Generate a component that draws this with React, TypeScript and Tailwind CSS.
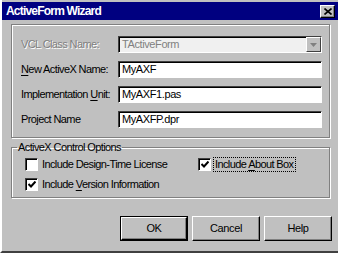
import React from "react";

const font = { fontFamily: '"Liberation Sans", Arial, sans-serif' };

function Field({
  label,
  ul,
  value,
  disabled,
  combo,
}: {
  label: [string, string, string];
  ul?: boolean;
  value: string;
  disabled?: boolean;
  combo?: boolean;
}) {
  return (
    <div className="flex items-center h-[17px]">
      <div
        className={
          "w-[97px] shrink-0 text-[11px] tracking-[-0.6px] leading-none whitespace-nowrap " +
          (disabled ? "text-[#808080] [text-shadow:1px_1px_0_#fff]" : "text-black")
        }
      >
        {label[0]}
        {ul ? <span className="underline underline-offset-2">{label[1]}</span> : label[1]}
        {label[2]}
      </div>
      <div
        className={
          "flex-1 h-[17px] flex items-center border-t border-l border-t-[#404040] border-l-[#404040] border-b border-r border-b-white border-r-white shadow-[inset_1px_1px_0_#000] " +
          (disabled ? "bg-[#f0f0f0]" : "bg-white")
        }
      >
        <span
          className={
            "flex-1 pl-[3px] text-[11px] tracking-[-0.4px] leading-none " +
            (disabled ? "text-[#808080]" : "text-black")
          }
        >
          {value}
        </span>
        {combo && (
          <div className="w-[15px] h-[15px] bg-[#c0c0c0] border border-t-white border-l-white border-b-[#404040] border-r-[#404040] flex items-center justify-center">
            <svg width="7" height="4" viewBox="0 0 7 4">
              <polygon points="0,0 7,0 3.5,4" fill="#808080" />
            </svg>
          </div>
        )}
      </div>
    </div>
  );
}

function Check({
  checked,
  children,
  focus,
}: {
  checked?: boolean;
  children: React.ReactNode;
  focus?: boolean;
}) {
  return (
    <div className="flex items-center gap-[3px] h-[13px] whitespace-nowrap">
      <div className="w-[13px] h-[13px] shrink-0 bg-white border-t border-l border-t-[#404040] border-l-[#404040] border-b border-r border-b-white border-r-white shadow-[inset_1px_1px_0_#000] flex items-center justify-center">
        {checked && (
          <svg width="8" height="7" viewBox="0 0 8 7">
            <path d="M0.5 3 L3 5.5 L7.5 0.5" stroke="#000" strokeWidth="2" fill="none" />
          </svg>
        )}
      </div>
      <span
        className={
          "text-[11px] tracking-[-0.6px] leading-none text-black px-[1px] py-[1px] " +
          (focus ? "outline outline-1 outline-dotted outline-black" : "")
        }
      >
        {children}
      </span>
    </div>
  );
}

function Btn({ children, def }: { children: React.ReactNode; def?: boolean }) {
  return (
    <div className={"w-[68px] h-[25px] " + (def ? "border border-black" : "")}>
      <div className="w-full h-full bg-[#c0c0c0] border border-t-white border-l-white border-b-[#000] border-r-[#000] shadow-[inset_-1px_-1px_0_#808080] flex items-center justify-center text-[11px] tracking-[-0.4px] text-black">
        {children}
      </div>
    </div>
  );
}

export default function App() {
  return (
    <div
      className="w-[338px] h-[253px] bg-[#c0c0c0] border-l-2 border-l-white border-b-2 border-b-[#404040] overflow-hidden flex flex-col"
      style={font}
    >
      <div className="mt-[2px] h-[18px] bg-[#000080] flex items-center justify-between pl-[4px] pr-[3px]">
        <span className="text-white font-bold text-[12px] tracking-[-0.8px]">ActiveForm Wizard</span>
        <div className="w-[15px] h-[13px] bg-[#c0c0c0] border border-t-white border-l-white border-b-black border-r-black shadow-[inset_-1px_-1px_0_#808080] flex items-center justify-center">
          <svg width="8" height="7" viewBox="0 0 8 7">
            <path d="M0.5 0.5 L7.5 6.5 M7.5 0.5 L0.5 6.5" stroke="#000" strokeWidth="1.6" />
          </svg>
        </div>
      </div>

      <div className="pl-[9px] pr-[8px] pt-[4px]">
        <div className="h-[114px] border border-[#808080] shadow-[inset_1px_1px_0_#fff,1px_1px_0_#fff] pl-[9px] pr-[7px] pt-[11px] flex flex-col gap-[8px]">
          <Field label={["VCL Class Name:", "", ""]} value="TActiveForm" disabled combo />
          <Field label={["", "N", "ew ActiveX Name:"]} ul value="MyAXF" />
          <Field label={["Implementation ", "U", "nit:"]} ul value="MyAXF1.pas" />
          <Field label={["Project Name", "", ""]} value="MyAXFP.dpr" />
        </div>

        <fieldset className="mt-[4px] h-[56px] border border-[#808080] shadow-[inset_1px_1px_0_#fff,1px_1px_0_#fff] px-0">
          <legend className="ml-[5px] px-[1px] text-[11px] tracking-[-0.6px] leading-none text-black">
            ActiveX Control Options
          </legend>
          <div className="flex mt-[5px] pl-[13px]">
            <div className="w-[173px] shrink-0 flex flex-col gap-[7px]">
              <Check>Include Design-Time License</Check>
              <Check checked>
                Include <span className="underline underline-offset-2">V</span>ersion Information
              </Check>
            </div>
            <Check checked focus>
              Include <span className="underline underline-offset-2">A</span>bout Box
            </Check>
          </div>
        </fieldset>
      </div>

      <div className="flex justify-end gap-[4px] pr-[6px] mt-[18px]">
        <Btn def>OK</Btn>
        <Btn>Cancel</Btn>
        <Btn>Help</Btn>
      </div>
    </div>
  );
}
